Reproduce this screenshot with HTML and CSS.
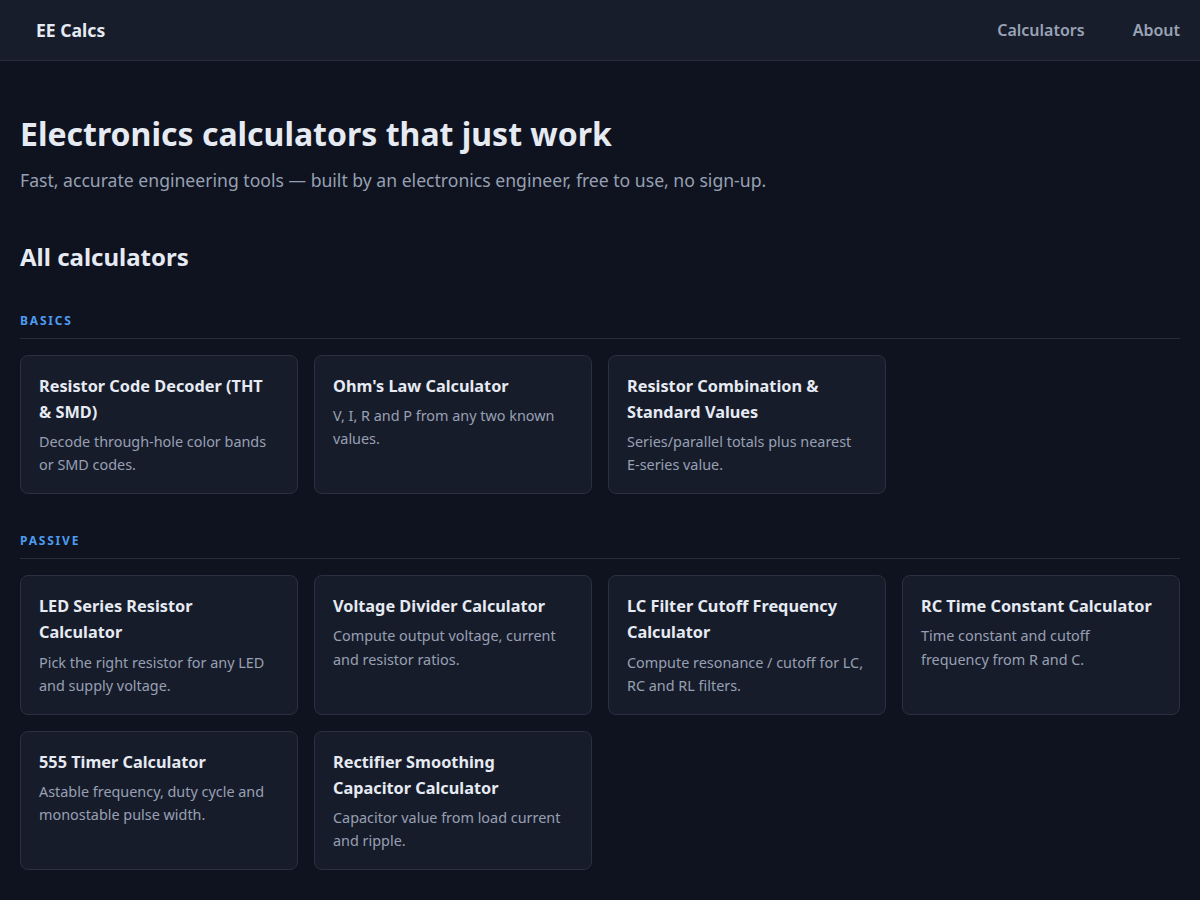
FILE: index.html
```html
<!DOCTYPE html>
<html lang="en">
<head>
<meta charset="utf-8">
<title>EE Calcs</title>
<link rel="stylesheet" href="styles.css">
</head>
<body>
<header class="topbar">
  <a class="brand" href="#">EE Calcs</a>
  <nav class="nav">
    <a href="#">Calculators</a>
    <a href="#">About</a>
  </nav>
</header>
<main class="main">
  <section class="hero">
    <h1>Electronics calculators that just work</h1>
    <p class="lead">Fast, accurate engineering tools — built by an electronics engineer, free to use, no sign-up.</p>
  </section>
  <h2 class="section-title">All calculators</h2>

  <section class="group">
    <h3 class="group-label">BASICS</h3>
    <div class="grid">
      <a class="card" href="#"><h4>Resistor Code Decoder (THT &amp; SMD)</h4><p>Decode through-hole color bands or SMD codes.</p></a>
      <a class="card" href="#"><h4>Ohm's Law Calculator</h4><p>V, I, R and P from any two known values.</p></a>
      <a class="card" href="#"><h4>Resistor Combination &amp; Standard Values</h4><p>Series/parallel totals plus nearest E&#8209;series value.</p></a>
    </div>
  </section>

  <section class="group">
    <h3 class="group-label">PASSIVE</h3>
    <div class="grid">
      <a class="card" href="#"><h4>LED Series Resistor Calculator</h4><p>Pick the right resistor for any LED and supply voltage.</p></a>
      <a class="card" href="#"><h4>Voltage Divider Calculator</h4><p>Compute output voltage, current and resistor ratios.</p></a>
      <a class="card" href="#"><h4>LC Filter Cutoff Frequency Calculator</h4><p>Compute resonance / cutoff for LC, RC and RL filters.</p></a>
      <a class="card" href="#"><h4>RC Time Constant Calculator</h4><p>Time constant and cutoff frequency from R and C.</p></a>
      <a class="card" href="#"><h4>555 Timer Calculator</h4><p>Astable frequency, duty cycle and monostable pulse width.</p></a>
      <a class="card" href="#"><h4>Rectifier Smoothing Capacitor Calculator</h4><p>Capacitor value from load current and ripple.</p></a>
    </div>
  </section>
</main>
</body>
</html>
```
FILE: styles.css
```css
* { box-sizing: border-box; }
html, body { margin: 0; padding: 0; }
body {
  background: #0f131f;
  color: #e6eaf2;
  font-family: "Noto Sans", "Open Sans", sans-serif;
}
a { color: inherit; text-decoration: none; }

.topbar {
  height: 61px;
  display: flex;
  align-items: center;
  justify-content: space-between;
  padding: 0 20px 0 36px;
  background: #181d2c;
  border-bottom: 1px solid #272d3e;
}
.brand {
  font-size: 17.6px;
  font-weight: 700;
  color: #e6eaf2;
}
.nav {
  display: flex;
  gap: 48px;
}
.nav a {
  font-size: 16px;
  font-weight: 600;
  color: #9aa3b5;
}

.main {
  padding: 0 20px 40px;
}
.hero h1 {
  margin: 52px 0 0;
  font-size: 32px;
  line-height: 1.3;
  font-weight: 700;
  color: #e6eaf2;
}
.lead {
  margin: 12px 0 0;
  font-size: 17.6px;
  line-height: 1.5;
  color: #97a0b3;
}
.section-title {
  margin: 48px 0 0;
  font-size: 24px;
  line-height: 1.3;
  font-weight: 700;
  color: #e6eaf2;
}
.group { margin-top: 40px; }
.group + .group { margin-top: 38px; }
.group-label {
  margin: 0 0 16px;
  padding-bottom: 8px;
  border-bottom: 1px solid #262c3e;
  font-size: 12px;
  line-height: 18px;
  font-weight: 700;
  letter-spacing: 1.8px;
  color: #4d9bf0;
}
.grid {
  display: grid;
  grid-template-columns: repeat(4, 1fr);
  gap: 16px;
}
.card {
  display: block;
  background: #171c2b;
  border: 1px solid #2a3042;
  border-radius: 8px;
  padding: 17px 18px 17px;
}
.card h4 {
  margin: 0 0 5px;
  font-size: 16.3px;
  line-height: 1.6;
  font-weight: 700;
  color: #e6eaf2;
}
.card p {
  margin: 0;
  font-size: 14.4px;
  line-height: 1.6;
  color: #97a0b3;
}
```
